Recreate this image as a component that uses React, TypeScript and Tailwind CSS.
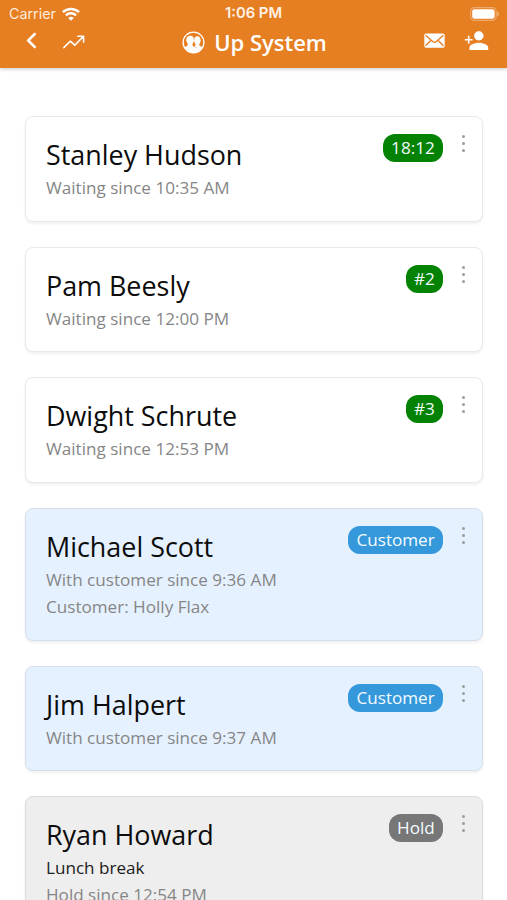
import { IoIosArrowBack, IoMdPersonAdd } from "react-icons/io";

type Entry = {
  name: string;
  note?: string;
  lines: string[];
  badge: string;
  kind: "up" | "customer" | "hold";
};

const entries: Entry[] = [
  { name: "Stanley Hudson", lines: ["Waiting since 10:35 AM"], badge: "18:12", kind: "up" },
  { name: "Pam Beesly", lines: ["Waiting since 12:00 PM"], badge: "#2", kind: "up" },
  { name: "Dwight Schrute", lines: ["Waiting since 12:53 PM"], badge: "#3", kind: "up" },
  { name: "Michael Scott", lines: ["With customer since 9:36 AM", "Customer: Holly Flax"], badge: "Customer", kind: "customer" },
  { name: "Jim Halpert", lines: ["With customer since 9:37 AM"], badge: "Customer", kind: "customer" },
  { name: "Ryan Howard", note: "Lunch break", lines: ["Hold since 12:54 PM"], badge: "Hold", kind: "hold" },
];

const cardStyles = {
  up: "bg-white border-[#e9e9e9]",
  customer: "bg-[#e5f1ff] border-[#d5dfea]",
  hold: "bg-[#eeeeee] border-[#dcdcdc]",
};

const badgeStyles = {
  up: "bg-[#048204]",
  customer: "bg-[#3498db]",
  hold: "bg-[#777777]",
};

function Wifi() {
  return (
    <svg className="h-[14px] w-[18px]" viewBox="0 0 18 14" fill="none" stroke="white" strokeWidth="2.5">
      <path d="M0.9 5.2a11.6 11.6 0 0 1 16.2 0" />
      <path d="M3.9 8.3a7.3 7.3 0 0 1 10.2 0" />
      <path d="M9 13.8 6.2 11a4 4 0 0 1 5.6 0z" fill="white" stroke="none" />
    </svg>
  );
}

function Battery() {
  return (
    <svg className="h-[14px] w-[30px]" viewBox="0 0 30 14">
      <rect x="1.6" y="0.6" width="25.6" height="12.8" rx="3.8" fill="none" stroke="white" strokeOpacity="0.35" strokeWidth="1.1" />
      <rect x="3.2" y="2.3" width="22.4" height="9.4" rx="2.3" fill="white" />
      <path d="M28.300 4.700c1.900.6 1.900 4 0 4.600z" fill="white" fillOpacity="0.5" />
    </svg>
  );
}

function Trend() {
  return (
    <svg className="-mt-0.5 h-[14px] w-[23px]" viewBox="0 0 23 14" fill="none" stroke="white" strokeWidth="1.6" strokeLinecap="round" strokeLinejoin="round">
      <path d="M0.8 12.600 7.200 6.200 11.800 10.200 20 1.800M14.800 1.300H20.600V7.100" />
    </svg>
  );
}

function People() {
  return (
    <svg className="h-[23px] w-[23px]" viewBox="0 0 23 23">
      <defs>
        <clipPath id="disc">
          <circle cx="11.5" cy="11.5" r="10.4" />
        </clipPath>
      </defs>
      <circle cx="11.5" cy="11.5" r="10.4" fill="none" stroke="white" strokeWidth="1.3" />
      <g clipPath="url(#disc)" fill="white">
        <path d="M15.3 5.2c2.200 0 3.300 1.500 3.200 3.700.4.500.2 1.700-.3 2.100-.2 1-.5 1.600-.9 2-.1 1 .1 1.700.7 2 1.300.6 2.600 1 3.500 1.700L17.500 21l-2.600-3.700c-.8-.9-1.700-1.500-2.400-2 .9-.5 1.200-1.200.9-2.300-.5-.5-.8-1.100-.9-2-.5-.5-.6-1.600-.2-2.100-.1-2.200.8-3.700 3-3.700z" />
        <path d="M8.400 4.700c2.400 0 3.600 1.600 3.400 3.900.4.500.2 1.800-.3 2.200-.2 1-.6 1.700-1 2.100-.1 1.200 0 1.900.6 2.400 1.600.8 3.900 1.200 4.800 3L17 23H0v-6c1.500-.8 3.600-1.100 4.900-1.900.8-.5 1-1.200.8-2.400-.4-.4-.8-1.100-1-2.100-.5-.4-.7-1.600-.3-2.100-.1-2.200 1.500-3.800 4-3.800z" />
      </g>
    </svg>
  );
}

function Mail() {
  return (
    <svg className="-mt-1 h-[15px] w-[21px]" viewBox="0 0 21 15">
      <rect x="0.3" y="0.5" width="20.4" height="14.2" rx="1.8" fill="white" />
      <path d="M1.600 2.200 8.700 8.500c1.100 1 2.500 1 3.600 0L19.400 2.200M1.600 12.800 6.800 7.500M19.400 12.800 14.200 7.500" fill="none" stroke="#e67e22" strokeWidth="1.3" />
    </svg>
  );
}

function Card({ entry }: { entry: Entry }) {
  return (
    <article className={`flex items-start justify-between rounded-[8px] border pt-[17px] pr-[15.5px] pb-[18.9px] pl-5 shadow-[0_2px_3px_rgba(0,0,0,0.06)] ${cardStyles[entry.kind]}`}>
      <div className="whitespace-nowrap">
        <h2 className="text-[26.9px] leading-[41px] text-[#0c0c0c]">{entry.name}</h2>
        {entry.note && <p className="text-[17.1px] leading-[26.8px] text-[#202020]">{entry.note}</p>}
        {entry.lines.map((line) => (
          <p key={line} className="text-[17.1px] leading-[26.8px] text-[#868686]">{line}</p>
        ))}
      </div>
      <div className="flex items-start">
        <span className={`flex h-7 items-center rounded-[12px] px-[8.3px] text-[17.1px] leading-7 text-[#f4fbff] ${badgeStyles[entry.kind]}`}>{entry.badge}</span>
        <button aria-label="Options" className="ml-[17px] flex h-[19px] w-1.5 flex-col items-center justify-between py-px">
          <span className="size-[3px] rounded-full bg-[#9c9c9c]" />
          <span className="size-[3px] rounded-full bg-[#9c9c9c]" />
          <span className="size-[3px] rounded-full bg-[#9c9c9c]" />
        </button>
      </div>
    </article>
  );
}

export default function App() {
  return (
    <div className="h-[900px] overflow-hidden bg-white font-['Open_Sans',sans-serif]">
      <header className="h-[68px] bg-[#e67e22] text-white shadow-[0_1px_4px_rgba(0,0,0,0.22)]">
        <div className="grid h-[27px] grid-cols-3 items-center pr-2 pl-[9px] font-['Inter',sans-serif]">
          <div className="flex items-center gap-1.5">
            <span className="text-[14.3px] text-[#ffebd9]">Carrier</span>
            <Wifi />
          </div>
          <span className="-ml-px text-center text-[14.8px] font-semibold text-[#fff2e6]">1:06 PM</span>
          <div className="flex justify-end">
            <Battery />
          </div>
        </div>
        <div className="grid h-[31px] grid-cols-[1fr_auto_1fr] items-center">
          <div className="flex items-center gap-5 pl-5">
            <IoIosArrowBack className="-mt-1 h-[23px] w-[23px] stroke-white stroke-[14px]" />
            <Trend />
          </div>
          <h1 className="flex items-center gap-[9px] pl-0.5 text-[22px] leading-[31px] font-semibold">
            <People />
            Up System
          </h1>
          <div className="flex items-center justify-end gap-[19px] pr-[18px]">
            <Mail />
            <IoMdPersonAdd className="-mt-1 h-[25px] w-[25px]" />
          </div>
        </div>
      </header>
      <main className="flex flex-col gap-[25px] pt-12 pr-[24.5px] pl-[25px]">
        {entries.map((entry) => (
          <Card key={entry.name} entry={entry} />
        ))}
      </main>
    </div>
  );
}
